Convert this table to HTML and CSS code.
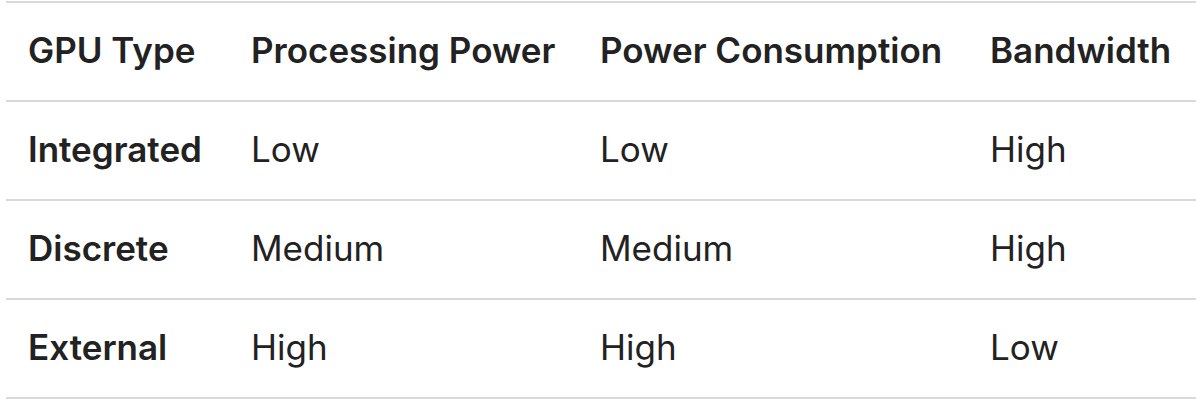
FILE: index.html
```html
<!DOCTYPE html>
<html>
<head>
<meta charset="utf-8">
<link rel="stylesheet" href="styles.css">
</head>
<body>
<table class="gpu-table">
  <colgroup>
    <col class="c1"><col class="c2"><col class="c3"><col class="c4">
  </colgroup>
  <thead>
    <tr><th>GPU Type</th><th>Processing Power</th><th>Power Consumption</th><th>Bandwidth</th></tr>
  </thead>
  <tbody>
    <tr><th>Integrated</th><td>Low</td><td>Low</td><td>High</td></tr>
    <tr><th>Discrete</th><td>Medium</td><td>Medium</td><td>High</td></tr>
    <tr><th>External</th><td>High</td><td>High</td><td>Low</td></tr>
  </tbody>
</table>
</body>
</html>
```
FILE: styles.css
```css
html, body {
  margin: 0;
  padding: 0;
  background: #ffffff;
}
body {
  padding: 1px 4px 0 6px;
  font-family: Inter, "Noto Sans", "Liberation Sans", sans-serif;
  color: #222222;
}
.gpu-table {
  width: 1190px;
  border-collapse: collapse;
  table-layout: fixed;
  border-top: 2px solid #d9d9d9;
}
.c1 { width: 223px; }
.c2 { width: 349px; }
.c3 { width: 390px; }
.c4 { width: 228px; }
.gpu-table th,
.gpu-table td {
  height: 99px;
  padding: 0 0 4px 22px;
  box-sizing: border-box;
  border-bottom: 2px solid #d9d9d9;
  text-align: left;
  vertical-align: middle;
  font-size: 35px;
  line-height: 42px;
  white-space: nowrap;
}
.gpu-table th {
  font-weight: 600;
}
.gpu-table td {
  font-weight: 400;
}
```
